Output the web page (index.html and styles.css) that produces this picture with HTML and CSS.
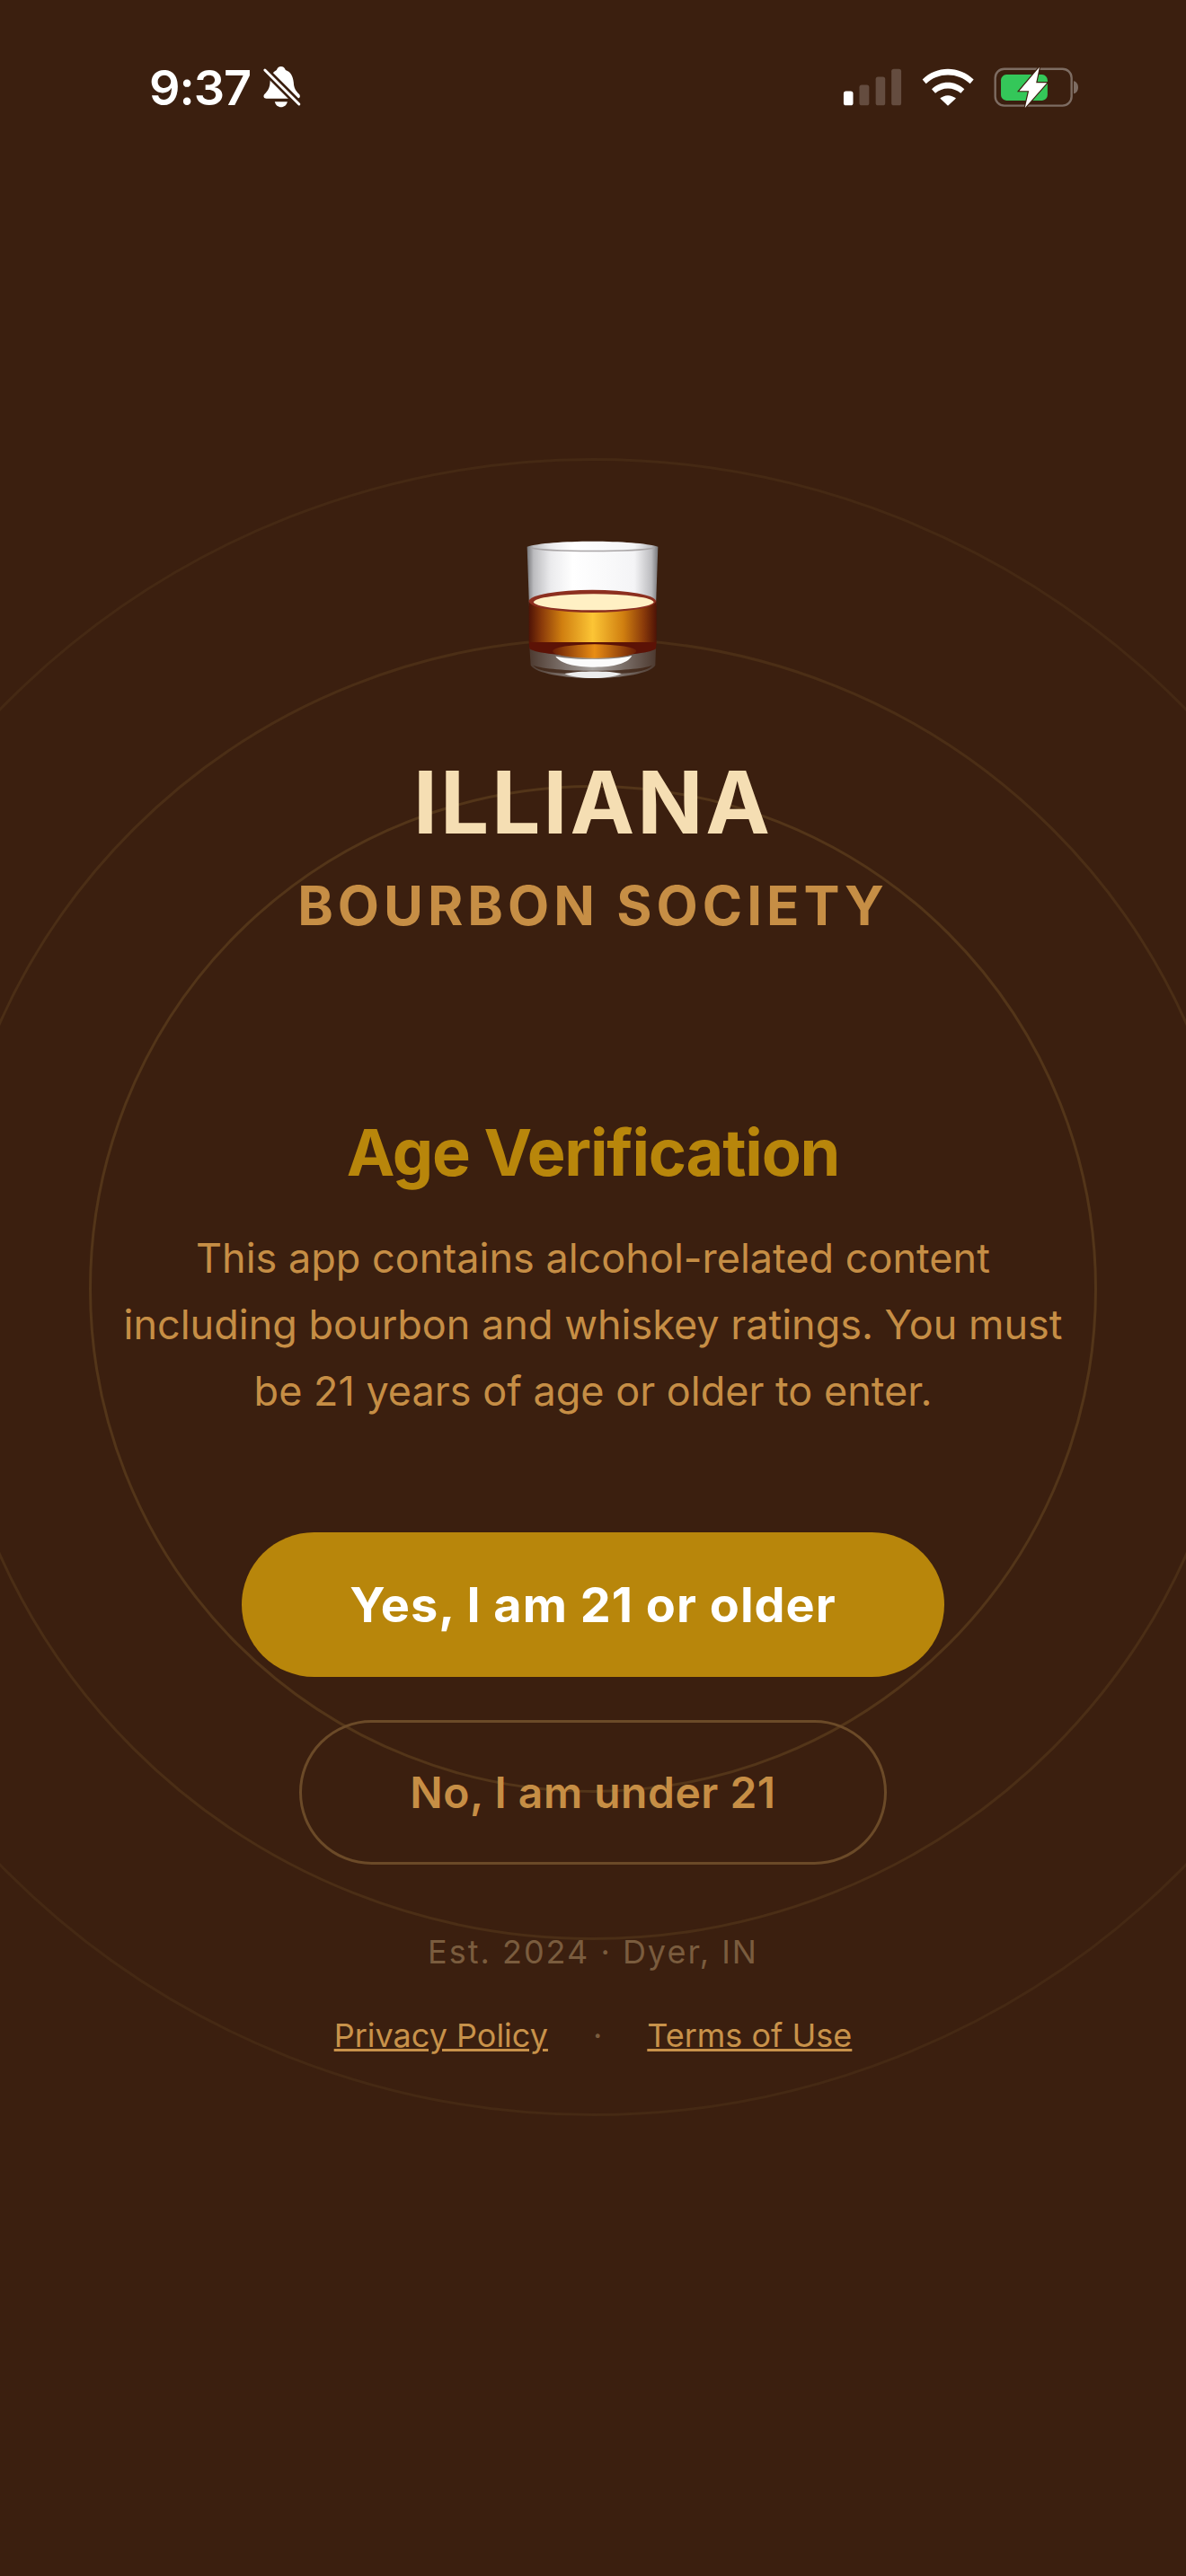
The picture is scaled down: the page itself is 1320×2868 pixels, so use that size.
FILE: index.html
```html
<!DOCTYPE html>
<html lang="en">
<head>
  <meta charset="UTF-8">
  <meta name="viewport" content="width=device-width, initial-scale=1.0">
  <title>Illiana Bourbon Society</title>
  <link rel="stylesheet" href="styles.css">
</head>
<body>
  <div class="screen">
    <!-- status bar -->
    <header class="status-bar">
      <div class="status-left">
        <span class="clock">9:37</span>
        <svg class="icon-bell" viewBox="450 70 140 150">
          <path fill="#fff" d="M515 76c7 0 13 5 15 12 18 6 25 22 27 42 1 18 7 28 18 38 6 6 3 15-6 15H466c-9 0-12-9-6-15 11-10 17-20 18-38 1-20 9-36 22-42 2-7 8-12 15-12z"/>
          <path fill="#fff" d="M494 194h42c-2 11-11 18-21 18s-19-7-21-18z"/>
          <path stroke="#3b1f0f" stroke-width="25" d="M448 75l134 134"/>
          <path stroke="#fff" stroke-width="9" stroke-linecap="round" d="M461 88l114 114"/>
        </svg>
      </div>
      <div class="status-right">
        <svg class="icon-signal" viewBox="80 76 198 127">
          <rect x="82" y="153" width="32" height="48" rx="8" fill="#fff"/>
          <rect x="135" y="132" width="33" height="69" rx="8" fill="#644c3f"/>
          <rect x="190" y="105" width="32" height="96" rx="8" fill="#644c3f"/>
          <rect x="243" y="78" width="33" height="123" rx="8" fill="#644c3f"/>
        </svg>
        <svg class="icon-wifi" viewBox="340 76 180 128">
          <path fill="#fff" d="M345 113c24-23 54-35 85-35s61 12 86 35l-12 14c-21-19-46-29-74-29s-53 10-73 29z"/>
          <path fill="#fff" d="M376 145c15-14 34-22 54-22s39 8 55 22l-12 14c-12-10-27-16-43-16s-30 6-42 16z"/>
          <path fill="#fff" d="M404 176c7-6 16-10 26-10s19 4 27 10l-27 25z"/>
        </svg>
        <svg class="icon-battery" viewBox="583 70 284 140">
          <rect x="588" y="78" width="254" height="122" rx="30" fill="none" stroke="#7d6c62" stroke-width="7"/>
          <path fill="#7d6c62" d="M849 118c9 2 15 10 15 21s-6 19-15 21z"/>
          <rect x="607" y="97" width="155" height="86" rx="18" fill="#34c759"/>
          <path fill="#fff" stroke="#3b1f0f" stroke-width="7" paint-order="stroke" d="M735 72l-67 79h32l-13 56 73-83h-36z"/>
        </svg>
      </div>
    </header>

    <main class="gate">
      <!-- rings behind the content -->
      <div class="ring ring-lg"></div>
      <div class="ring ring-md"></div>
      <div class="ring ring-sm"></div>

      <svg class="glass" viewBox="0 0 600 570">
        <defs>
          <linearGradient id="glassWall" x1="0" x2="1" y1="0" y2="0">
            <stop offset="0" stop-color="#77777a"/>
            <stop offset=".05" stop-color="#bcbcbf"/>
            <stop offset=".18" stop-color="#ebebed"/>
            <stop offset=".35" stop-color="#ffffff"/>
            <stop offset=".82" stop-color="#f4f4f6"/>
            <stop offset=".95" stop-color="#bcbcbf"/>
            <stop offset="1" stop-color="#77777a"/>
          </linearGradient>
          <linearGradient id="whiskey" x1="0" x2="1" y1="0" y2="0">
            <stop offset="0" stop-color="#4f1306"/>
            <stop offset=".1" stop-color="#8a3a0a"/>
            <stop offset=".26" stop-color="#d07f10"/>
            <stop offset=".5" stop-color="#fcc535"/>
            <stop offset=".74" stop-color="#d07f10"/>
            <stop offset=".9" stop-color="#8a3a0a"/>
            <stop offset="1" stop-color="#4f1306"/>
          </linearGradient>
          <linearGradient id="shine" x1="0" x2="1" y1="0" y2="0">
            <stop offset="0" stop-color="#6a1e06"/>
            <stop offset=".5" stop-color="#e98d14"/>
            <stop offset="1" stop-color="#6a1e06"/>
          </linearGradient>
          <linearGradient id="foot" x1="0" x2="1" y1="0" y2="0">
            <stop offset="0" stop-color="#4d3a30"/>
            <stop offset=".5" stop-color="#a5a09d"/>
            <stop offset="1" stop-color="#4d3a30"/>
          </linearGradient>
        </defs>
        <path fill="url(#glassWall)" d="M80 86c70-24 365-24 437 0l-7 200H87z"/>
        <path fill="none" stroke="#a9a5a6" stroke-width="5" d="M92 90c60 14 350 14 414 0"/>
        <path fill="url(#foot)" d="M88 420c60 40 360 40 422 0l-2 62c-14 26-110 43-208 43S108 508 92 482z"/>
        <path fill="#3b1f0f" fill-opacity=".75" d="M100 482c60 24 340 24 398 0-20 26-110 30-198 30S120 508 100 482z"/>
        <path fill="url(#whiskey)" d="M86 268h426v137H86z"/>
        <path fill="#5c1206" d="M86 405h426l-2 22c-40 32-380 32-422 0z"/>
        <ellipse cx="305" cy="435" rx="140" ry="23" fill="url(#shine)"/>
        <ellipse cx="298" cy="268" rx="212" ry="38" fill="#8c2f1f"/>
        <ellipse cx="302" cy="271" rx="200" ry="27" fill="#fff0c4"/>
        <path fill="#fbfbfb" d="M175 452c70 14 190 14 255-2-14 26-60 38-125 38s-115-12-130-36z"/>
        <path fill="#ececec" d="M205 510c50-10 150-10 190 0-40 20-150 20-190 0z"/>
      </svg>

      <h1 class="brand">ILLIANA</h1>
      <p class="brand-sub">BOURBON SOCIETY</p>

      <h2 class="title">Age Verification</h2>
      <p class="notice">This app contains alcohol-related content including bourbon and whiskey ratings. You must be 21 years of age or older to enter.</p>

      <button class="btn btn-yes">Yes, I am 21 or older</button>
      <button class="btn btn-no">No, I am under 21</button>

      <p class="est">Est. 2024 · Dyer, IN</p>
      <nav class="links">
        <a href="#">Privacy Policy</a>
        <span class="dot">·</span>
        <a href="#">Terms of Use</a>
      </nav>
    </main>
  </div>
</body>
</html>
```

FILE: styles.css
```css
/* reset and base */
* {
  margin: 0;
  padding: 0;
  box-sizing: border-box;
}

body {
  background: #3b1f0f;
  font-family: Inter, "Liberation Sans", sans-serif;
}

.screen {
  height: 2868px;
  overflow: hidden;
}

/* status bar */
.status-bar {
  display: flex;
  justify-content: space-between;
  align-items: center;
  height: 194px;
  padding: 0 119px 0 166px;
}

.status-left,
.status-right {
  display: flex;
  align-items: center;
}

.status-left {
  gap: 12px;
}

.status-right {
  gap: 21px;
}

.clock {
  color: #fff;
  font-size: 54px;
  font-weight: 600;
  letter-spacing: -1px;
}

.icon-bell {
  width: 47px;
  height: 50px;
}

.icon-signal {
  width: 66px;
  height: 42px;
}

.icon-wifi {
  width: 60px;
  height: 43px;
}

.icon-battery {
  width: 95px;
  height: 47px;
}

/* main column */
.gate {
  position: relative;
  display: flex;
  flex-direction: column;
  align-items: center;
  text-align: center;
  padding-top: 386px;
}

.ring {
  position: absolute;
  left: 50%;
  border-radius: 50%;
  border-style: solid;
  border-width: 3px;
  transform: translateX(-50%);
}

.ring-sm {
  top: 680px;
  width: 1122px;
  height: 1122px;
  border-color: #533519;
}

.ring-md {
  top: 516px;
  width: 1450px;
  height: 1450px;
  border-color: #4b2e16;
}

.ring-lg {
  top: 316px;
  width: 1846px;
  height: 1846px;
  border-color: #452914;
}

.gate > :not(.ring) {
  position: relative;
}

.glass {
  width: 200px;
  height: 190px;
}

.brand {
  margin-top: 65px;
  color: #f5deb3;
  font-size: 96px;
  font-weight: 700;
  line-height: 116px;
  letter-spacing: 3px;
}

.brand-sub {
  margin-top: 21px;
  color: #c68e45;
  font-size: 60px;
  font-weight: 700;
  line-height: 72px;
  letter-spacing: 5px;
}

.title {
  margin-top: 195px;
  color: #b8860b;
  font-size: 72px;
  font-weight: 700;
  line-height: 88px;
  letter-spacing: -1.2px;
}

.notice {
  width: 1080px;
  margin-top: 37px;
  color: #c68e45;
  font-size: 45px;
  line-height: 74px;
}

.btn {
  display: block;
  height: 161px;
  border-radius: 81px;
  font-family: inherit;
  background: none;
  cursor: pointer;
}

.btn-yes {
  width: 782px;
  margin-top: 120px;
  border: none;
  background: #b8860b;
  color: #fff;
  font-size: 54px;
  font-weight: 700;
  letter-spacing: 1px;
}

.btn-no {
  width: 654px;
  margin-top: 48px;
  border: 3px solid #6b4a28;
  color: #c68e45;
  font-size: 48px;
  font-weight: 600;
  letter-spacing: .5px;
}

.est {
  margin-top: 75px;
  color: #7a5c3e;
  font-size: 36px;
  line-height: 44px;
  letter-spacing: 2px;
}

.links {
  display: flex;
  align-items: center;
  gap: 50px;
  margin-top: 47px;
  font-size: 36px;
  line-height: 48px;
}

.links a {
  color: #c8924a;
}

.dot {
  color: #7a5c3e;
}
```
